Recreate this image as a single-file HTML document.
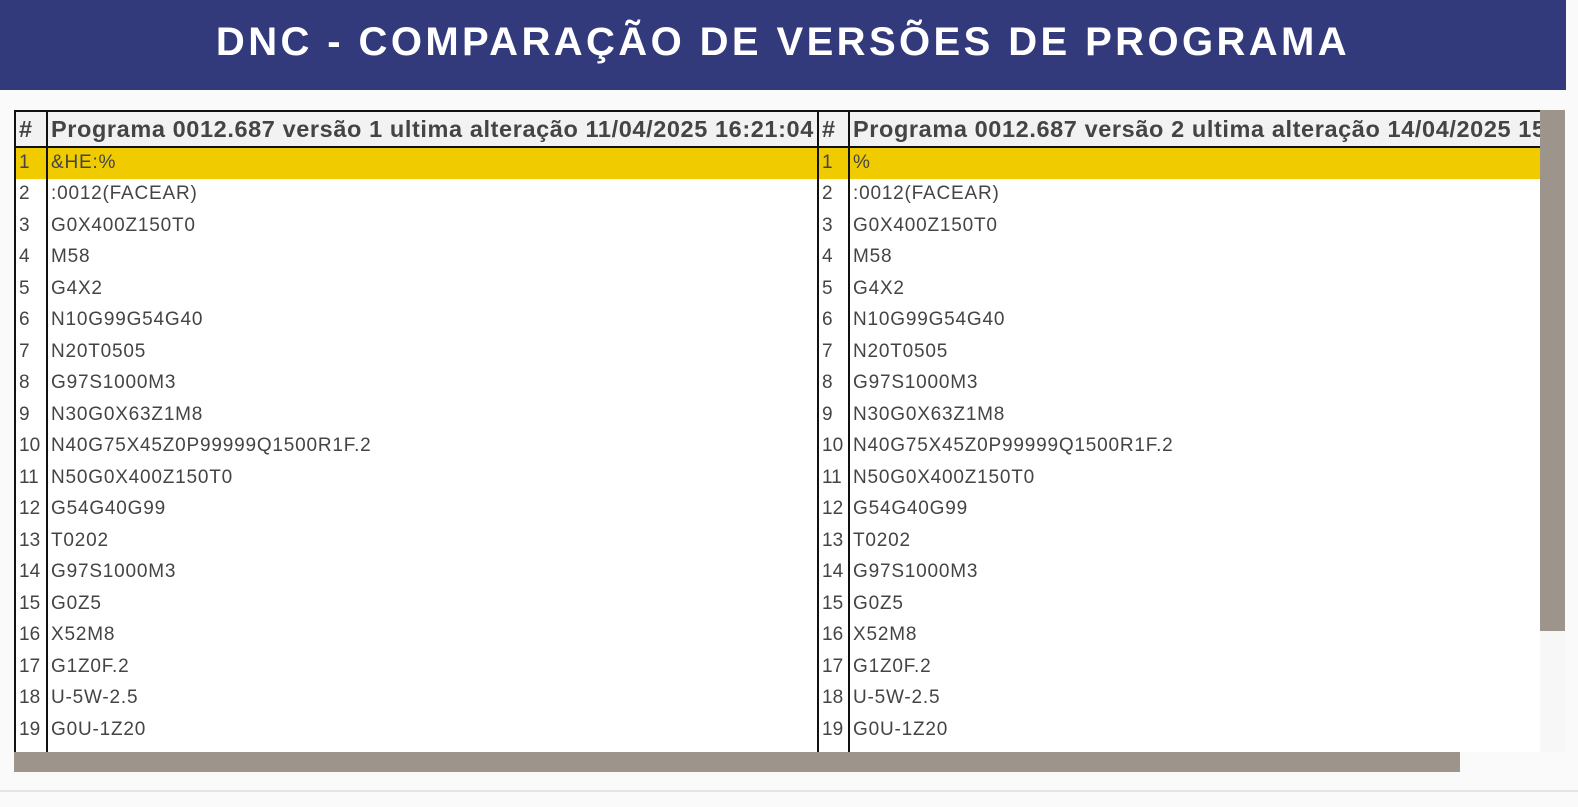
<!DOCTYPE html>
<html><head><meta charset="utf-8"><style>
*{margin:0;padding:0;box-sizing:border-box}
body{width:1578px;height:807px;background:#fafafa;font-family:"Liberation Sans",sans-serif;position:relative;overflow:hidden}
.hdr{position:absolute;left:0;top:0;width:1566px;height:90px;background:#333a7b;color:#fff;font-weight:bold;font-size:40px;letter-spacing:3.4px;text-align:center;line-height:84px}
.wrap{position:absolute;left:14px;top:110px;width:1526px;height:642px;background:#fff;overflow:hidden}
table{border-collapse:collapse;position:absolute;left:0;top:0;table-layout:fixed;width:1560px}
td,th{height:31.5px;padding:0 0 0 3px;white-space:nowrap;overflow:hidden;color:#444;font-size:19px;letter-spacing:0.8px;text-align:left}
th{background:#f2f2f2;font-size:23.5px;letter-spacing:0.6px;font-weight:bold;height:36px;border-top:2px solid #111;border-bottom:2px solid #111}
.n{border-left:2px solid #111;border-right:2px solid #111;padding-left:3px;letter-spacing:0}
tr.y td{background:#efcb00}
.vs{position:absolute;left:1540px;top:110px;width:25px;height:642px;background:#f7f7f7}
.vt{position:absolute;left:1540px;top:110px;width:25px;height:521px;background:#9d958b}
.hs{position:absolute;left:14px;top:752px;width:1446px;height:20px;background:#9d958b}
.ln{position:absolute;left:0;top:790px;width:1578px;height:2px;background:#e4e4e4}
</style></head><body>
<div class="hdr">DNC - COMPARAÇÃO DE VERSÕES DE PROGRAMA</div>
<div class="wrap"><table>
<colgroup><col style="width:32px"><col style="width:771px"><col style="width:31px"><col style="width:726px"></colgroup>
<tr><th class="n">#</th><th>Programa 0012.687 versão 1 ultima alteração 11/04/2025 16:21:04</th><th class="n">#</th><th>Programa 0012.687 versão 2 ultima alteração 14/04/2025 15:02:11</th></tr>
<tr class="y"><td class="n">1</td><td>&amp;HE:%</td><td class="n">1</td><td>%</td></tr>
<tr><td class="n">2</td><td>:0012(FACEAR)</td><td class="n">2</td><td>:0012(FACEAR)</td></tr>
<tr><td class="n">3</td><td>G0X400Z150T0</td><td class="n">3</td><td>G0X400Z150T0</td></tr>
<tr><td class="n">4</td><td>M58</td><td class="n">4</td><td>M58</td></tr>
<tr><td class="n">5</td><td>G4X2</td><td class="n">5</td><td>G4X2</td></tr>
<tr><td class="n">6</td><td>N10G99G54G40</td><td class="n">6</td><td>N10G99G54G40</td></tr>
<tr><td class="n">7</td><td>N20T0505</td><td class="n">7</td><td>N20T0505</td></tr>
<tr><td class="n">8</td><td>G97S1000M3</td><td class="n">8</td><td>G97S1000M3</td></tr>
<tr><td class="n">9</td><td>N30G0X63Z1M8</td><td class="n">9</td><td>N30G0X63Z1M8</td></tr>
<tr><td class="n">10</td><td>N40G75X45Z0P99999Q1500R1F.2</td><td class="n">10</td><td>N40G75X45Z0P99999Q1500R1F.2</td></tr>
<tr><td class="n">11</td><td>N50G0X400Z150T0</td><td class="n">11</td><td>N50G0X400Z150T0</td></tr>
<tr><td class="n">12</td><td>G54G40G99</td><td class="n">12</td><td>G54G40G99</td></tr>
<tr><td class="n">13</td><td>T0202</td><td class="n">13</td><td>T0202</td></tr>
<tr><td class="n">14</td><td>G97S1000M3</td><td class="n">14</td><td>G97S1000M3</td></tr>
<tr><td class="n">15</td><td>G0Z5</td><td class="n">15</td><td>G0Z5</td></tr>
<tr><td class="n">16</td><td>X52M8</td><td class="n">16</td><td>X52M8</td></tr>
<tr><td class="n">17</td><td>G1Z0F.2</td><td class="n">17</td><td>G1Z0F.2</td></tr>
<tr><td class="n">18</td><td>U-5W-2.5</td><td class="n">18</td><td>U-5W-2.5</td></tr>
<tr><td class="n">19</td><td>G0U-1Z20</td><td class="n">19</td><td>G0U-1Z20</td></tr>
<tr><td class="n">20</td><td>X52</td><td class="n">20</td><td>X52</td></tr>
</table></div>
<div class="vs"></div><div class="vt"></div><div class="hs"></div><div class="ln"></div>
</body></html>
